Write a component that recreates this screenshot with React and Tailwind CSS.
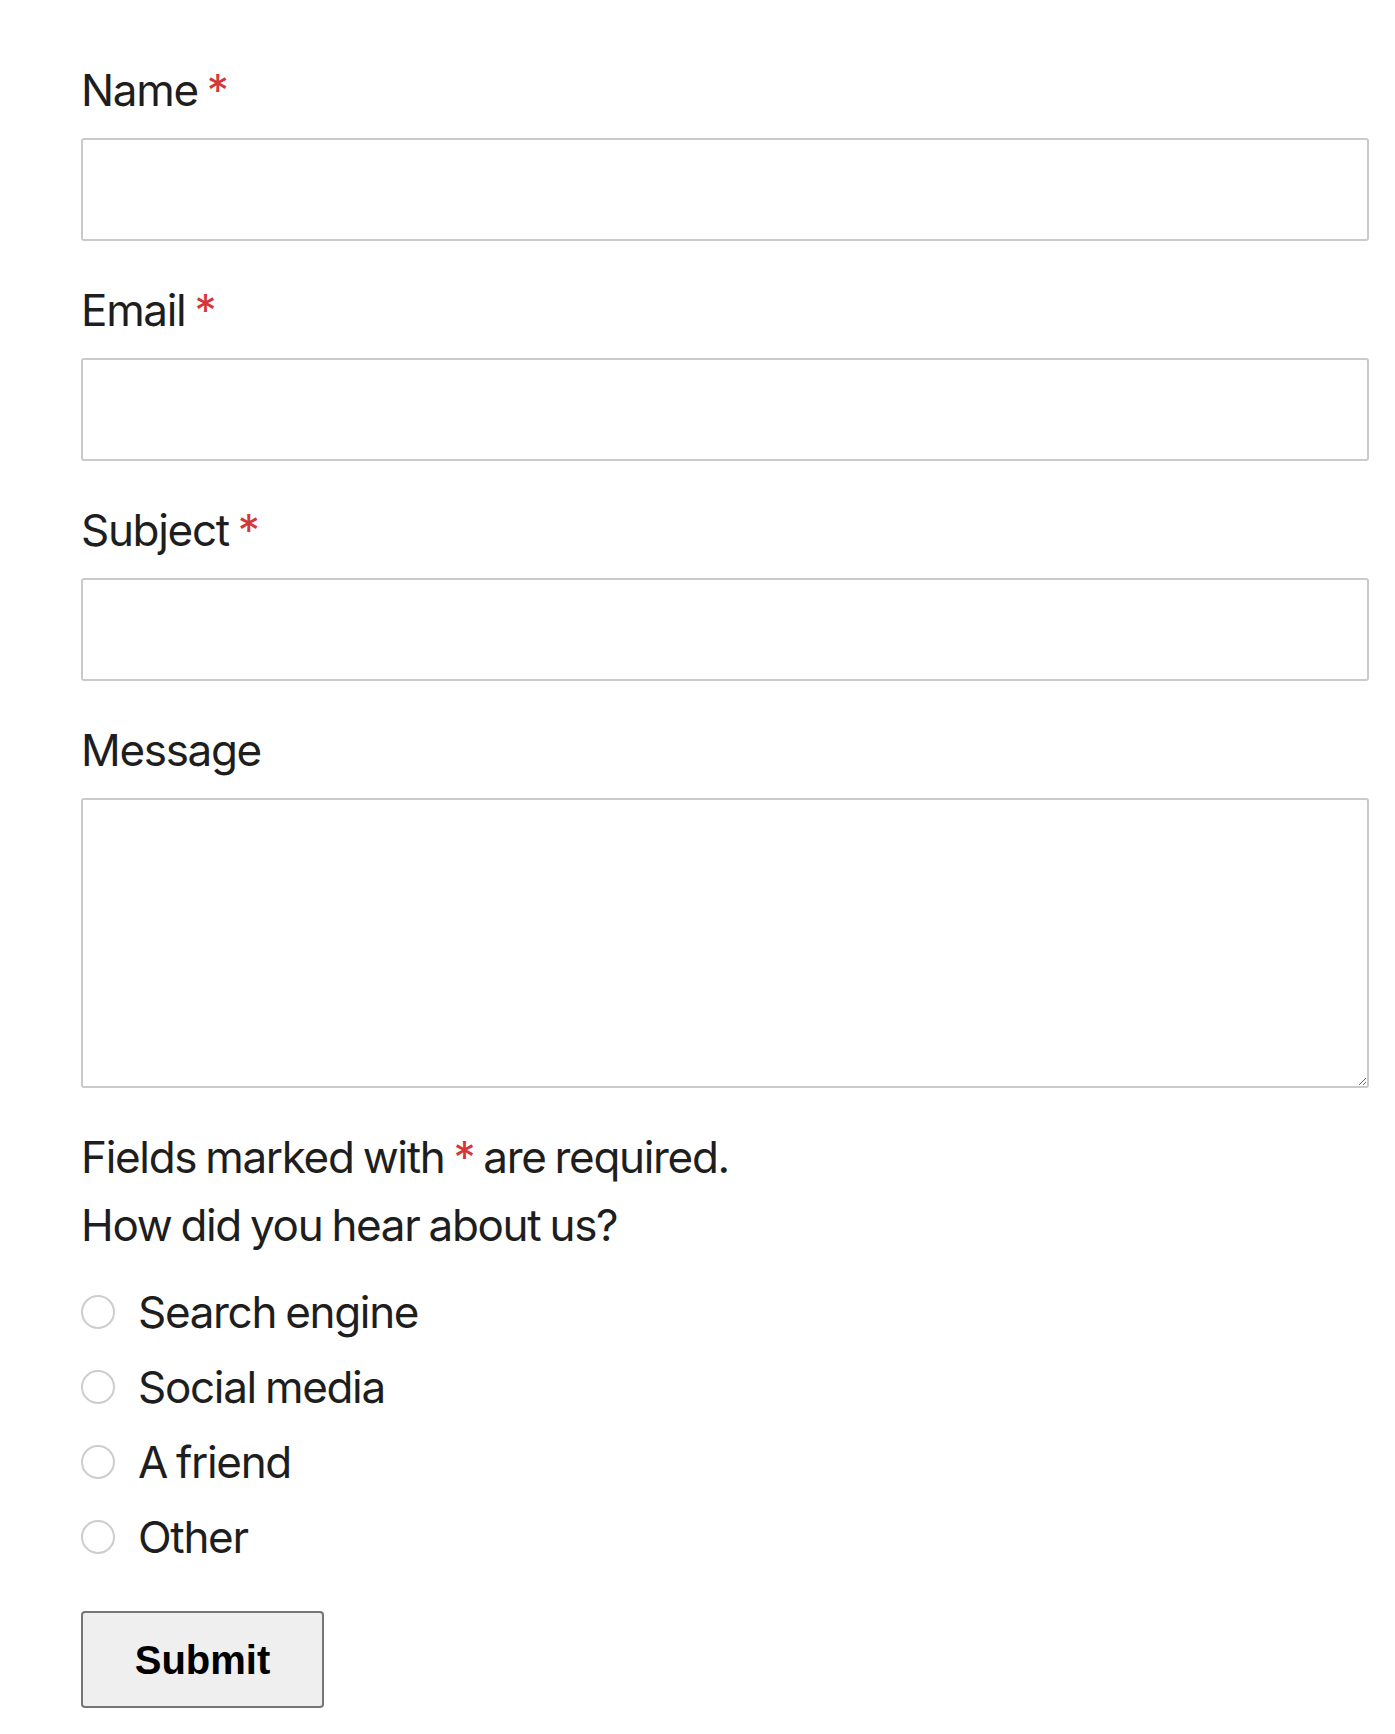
import React from 'react';

const Req = () => <span className="text-[#d63638]">*</span>;

const Field = ({ label, required, children }) => (
  <div className="mb-[36px]">
    <label className="block leading-[66px] mb-[15px]">
      {label} {required && <Req />}
    </label>
    {children}
  </div>
);

const options = ['Search engine', 'Social media', 'A friend', 'Other'];

const App = () => {
  return (
    <div className="min-h-screen bg-white font-['Inter',sans-serif] text-[44px] tracking-[-0.03em] [word-spacing:-2px] text-[#1e1e1e]">
      <form className="ml-[81px] w-[1288px] pt-[57px] pb-[26px]" onSubmit={(e) => e.preventDefault()}>
        <Field label="Name" required>
          <input type="text" className="block w-full h-[103px] border-2 border-[#cacaca] rounded-[3px] px-4 outline-none" />
        </Field>
        <Field label="Email" required>
          <input type="email" className="block w-full h-[103px] border-2 border-[#cacaca] rounded-[3px] px-4 outline-none" />
        </Field>
        <Field label="Subject" required>
          <input type="text" className="block w-full h-[103px] border-2 border-[#cacaca] rounded-[3px] px-4 outline-none" />
        </Field>
        <div className="mb-[35px]">
          <label className="block leading-[66px] mb-[15px]">Message</label>
          <textarea className="block w-full h-[290px] border-2 border-[#cacaca] rounded-[3px] px-4 outline-none" />
        </div>

        <p className="leading-[68px]">
          Fields marked with <Req /> are required.
        </p>
        <p className="leading-[68px] mb-[20px]">How did you hear about us?</p>

        <div className="flex flex-col gap-[9px]">
          {options.map((opt) => (
            <label key={opt} className="flex items-center h-[66px]">
              <input
                type="radio"
                name="source"
                className="appearance-none w-[34px] h-[34px] rounded-full border-2 border-[#cdcdcd] bg-white mr-[23px] shrink-0"
              />
              <span className="leading-[66px]">{opt}</span>
            </label>
          ))}
        </div>

        <button
          type="submit"
          className="mt-[41px] block w-[243px] h-[97px] bg-[#efefef] border-2 border-[#767676] rounded-[4px] font-['Liberation_Sans',Arial,sans-serif] font-bold text-[40px] tracking-normal [word-spacing:normal] text-black"
        >
          Submit
        </button>
      </form>
    </div>
  );
};

export default App;
